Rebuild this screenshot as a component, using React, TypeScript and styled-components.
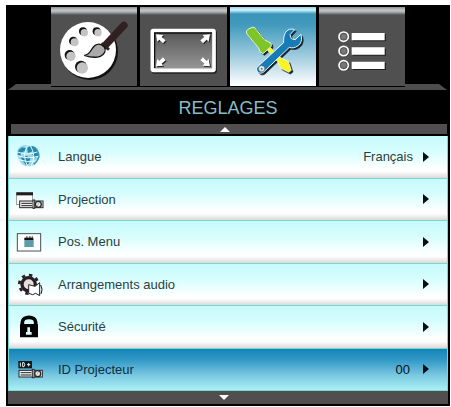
import React, { useState } from "react";
import styled, { createGlobalStyle, css } from "styled-components";

const GlobalStyle = createGlobalStyle`
  * { box-sizing: border-box; }
  body { margin: 0; background: #fff; font-family: "Liberation Sans", Arial, sans-serif; }
  button { font: inherit; color: inherit; border: 0; padding: 0; margin: 0; cursor: pointer; }
  svg { display: block; flex: none; }
`;

const Page = styled.main`
  padding: 5px 1px 1px 6px;
`;

const Panel = styled.section`
  background: #000;
  padding: 2px 2px 2px;
`;

const Tabs = styled.nav`
  position: relative;
  z-index: 1;
  display: grid;
  grid-template-columns: repeat(4, 1fr);
  gap: 3px;
  margin: 0 43px;
  background: #000;
`;

const Tab = styled.button<{ $active: boolean }>`
  display: flex;
  justify-content: center;
  height: 80px;
  overflow: hidden;
  border-bottom: 1px solid #000;
  background: ${({ $active }) =>
    $active
      ? "linear-gradient(#8fd3ea 0, #d8f3fa 3px, #7fc4dd 5px, #3a95b8 7px, #429abd 18px, #9bcadd 48px, #fff 78px)"
      : "linear-gradient(#8b8f8f 0, #c3c6c6 3px, #aeb2b2 5px, #6d6f6f 7px, #505050 8px, #505050 100%)"};
`;

const Ledge = styled.div`
  height: 6px;
  margin-top: -3px;
  margin-right: 1px;
  background: #4d4d4d;
  clip-path: polygon(8px 0, calc(100% - 8px) 0, 100% 100%, 0 100%);
`;

const Title = styled.h1`
  margin: 0;
  height: 34px;
  line-height: 36px;
  text-align: center;
  font-size: 18px;
  font-weight: 400;
  color: #86bcc5;
`;

const ScrollButton = styled.button<{ $edge: "top" | "bottom" }>`
  display: flex;
  align-items: center;
  justify-content: center;
  padding-right: 8px;
  background: #504e4e;
  ${({ $edge }) =>
    $edge === "top"
      ? css`
          width: calc(100% - 4px);
          height: 10px;
          margin: 0 1px 2px 3px;
        `
      : css`
          width: 100%;
          height: 13px;
        `}
`;

const List = styled.ul`
  list-style: none;
  margin: 0;
  padding: 0;
  min-height: 255px;
  display: grid;
  grid-auto-rows: 1fr;
`;

const Item = styled.li`
  display: flex;
`;

const Row = styled.button<{ $selected: boolean }>`
  flex: 1;
  display: flex;
  align-items: center;
  padding: 0 18px 0 6px;
  border: 1px solid #78d8cf;
  border-top: 0;
  font-size: 13px;
  text-align: left;
  color: ${({ $selected }) => ($selected ? "#0c3040" : "#294143")};
  background: ${({ $selected }) =>
    $selected
      ? "linear-gradient(#1684b8, #2f97c5 25%, #7cc9e2 65%, #a9f0f5)"
      : "linear-gradient(#c6fafb, #d6fdfd 35%, #fbffff 75%, #fff 84%, #ddd9d9)"};
`;

const Label = styled.span`
  flex: 1;
  margin-left: 13px;
`;

const Value = styled.span<{ $numeric: boolean }>`
  margin-right: ${({ $numeric }) => ($numeric ? "13px" : "10px")};
  color: ${({ $numeric }) => ($numeric ? "#001018" : "inherit")};
`;

function TabIcon({ x, children }: { x: number; children: React.ReactNode }) {
  return (
    <svg width="86" height="79" viewBox={`${x} 21 258 237`} aria-hidden="true">
      {children}
    </svg>
  );
}

function RowIcon({ y, children }: { y: number; children: React.ReactNode }) {
  return (
    <svg width="30" height="41" viewBox={`45 ${y} 90 123`} aria-hidden="true">
      {children}
    </svg>
  );
}

const holes = [
  [251, 96, 11],
  [292, 96, 11],
  [222, 125, 12],
  [211, 167, 14],
  [245, 202, 17],
];

const Palette = () => (
  <TabIcon x={153}>
    <circle cx="269" cy="155" r="85" fill="#111" />
    <circle cx="264" cy="150" r="84" fill="#fff" />
    {holes.map(([x, y, r]) => (
      <g key={`${x}-${y}`}>
        <circle cx={x - 2} cy={y - 2} r={r + 1} fill="#111" />
        <circle cx={x + 2} cy={y + 2} r={r} fill="#c4c4c4" />
      </g>
    ))}
    <path d="M316 136 372 76" stroke="#302021" strokeWidth="22" strokeLinecap="round" />
    <path d="M304 130 327 149" stroke="#302021" strokeWidth="9" />
    <path
      d="M253 166C274 163 271 147 284 137C294 130 305 132 313 141C320 151 313 163 301 169C287 174 271 172 253 166Z"
      fill="#aaa"
      stroke="#111"
      strokeWidth="4"
    />
  </TabIcon>
);

const arrow = "M0 0 22 2 17 8 29 18 21 27 10 16 4 22Z";

const Screen = () => (
  <TabIcon x={30}>
    <defs>
      <linearGradient id="screenFill" x2="0" y2="1">
        <stop stopColor="#555" />
        <stop offset="1" stopColor="#999" />
      </linearGradient>
    </defs>
    <rect x="70" y="96" width="185" height="119" fill="none" stroke="#222" strokeWidth="12" rx="3" />
    <rect x="67" y="92" width="185" height="119" fill="url(#screenFill)" stroke="#fff" strokeWidth="11" rx="3" />
    <path d="M74 204V99H246" fill="none" stroke="#111" strokeWidth="4" />
    <g fill="#222" transform="translate(3 3)">
      <path d={arrow} transform="translate(78 103)" />
      <path d={arrow} transform="translate(240 103) scale(-1 1)" />
      <path d={arrow} transform="translate(78 199) scale(1 -1)" />
      <path d={arrow} transform="translate(240 199) scale(-1 -1)" />
    </g>
    <g fill="#fff">
      <path d={arrow} transform="translate(78 103)" />
      <path d={arrow} transform="translate(240 103) scale(-1 1)" />
      <path d={arrow} transform="translate(78 199) scale(1 -1)" />
      <path d={arrow} transform="translate(240 199) scale(-1 -1)" />
    </g>
  </TabIcon>
);

const wrench =
  "M108 202 188 128C187 112 190 97 201 90C208 86 216 87 221 89L207 104 211 116 223 119 239 103C245 118 240 132 230 138C221 144 212 145 205 142L128 216C120 222 113 220 109 214C106 210 106 205 108 202Z";

const Tools = () => (
  <TabIcon x={27}>
    <g transform="translate(5 5)" fill="#17272d" stroke="#17272d" strokeWidth="2">
      <path d="M77 101Q73 93 82 87L94 82Q101 80 105 88L130 119 150 130 151 139 126 161 117 155 113 144Z" />
      <path d="M138 149 147 142 181 174 202 184 211 211 203 217 179 205 170 185Z" />
      <path d={wrench} />
    </g>
    <path d="M138 149 147 142 181 174 202 184 211 211 203 217 179 205 170 185Z" fill="#f8f522" stroke="#fff" strokeWidth="2" />
    <path d="M77 101Q73 93 82 87L94 82Q101 80 105 88L130 119 150 130 151 139 126 161 117 155 113 144Z" fill="#7dc52b" stroke="#e2f7d5" strokeWidth="3" />
    <path d={wrench} fill="#177cb5" stroke="#e9faff" strokeWidth="3" />
    <circle cx="122" cy="206" r="9" fill="#e8eeee" stroke="#3c3b38" strokeWidth="1" />
    <circle cx="122" cy="206" r="3" fill="#8e5c50" />
  </TabIcon>
);

const Options = () => (
  <TabIcon x={27}>
    {[110, 153, 196].map((y) => (
      <g key={y}>
        <path d={`M129 ${y - 7}H228V${y + 14}H129Z`} fill="#222" />
        <path d={`M125 ${y - 11}H224V${y + 11}H125Z`} fill="#fff" />
        <circle cx="103" cy={y + 2} r="15" fill="#222" />
        <circle cx="101" cy={y} r="14" fill="#777" stroke="#fff" strokeWidth="5" />
        <circle cx="101" cy={y} r="10" fill="none" stroke="#444" strokeWidth="2" />
      </g>
    ))}
  </TabIcon>
);

const Globe = () => (
  <RowIcon y={48}>
    <path d="M52 94Q53 79 73 75L98 78Q118 83 118 104 118 126 98 137 82 142 67 134 51 120 52 94Z" fill="#9bd9e7" />
    <path d="M55 91 66 82 78 85 75 94 64 97 61 108 53 105ZM81 82 97 78 112 90 116 106 106 115 97 104 98 94 84 99ZM62 113 78 107 91 114 87 130 78 136Z" fill="#2388ad" />
    <path d="M53 96Q82 109 117 94M55 119Q81 128 112 123M84 76Q64 105 83 139M91 77Q109 105 94 138M54 107Q82 119 118 108" fill="none" stroke="#effdff" strokeWidth="3" />
    <path d="M100 80Q117 90 117 110 111 126 101 133" fill="none" stroke="#3598b6" strokeWidth="4" />
  </RowIcon>
);

const Projector = ({ x = 0, y = 0 }) => (
  <g transform={`translate(${x} ${y})`} stroke="#292929" strokeWidth="3">
    <rect x="59" y="243" width="70" height="20" fill="#eee" />
    <path d="M64 250H96M64 257H96" strokeWidth="3" />
    <rect x="99" y="240" width="5" height="25" fill="#fff" />
    <circle cx="115" cy="253" r="9" fill="#eee" strokeWidth="4" />
    <path d="M109 262 120 243" strokeWidth="1" />
  </g>
);

const Projection = () => (
  <RowIcon y={177}>
    <rect x="50" y="218" width="48" height="36" fill="#f9fafa" stroke="#777" strokeWidth="2" />
    <path d="M49 217H99V226H49Z" fill="#231d20" />
    <Projector />
  </RowIcon>
);

const MenuPosition = () => (
  <RowIcon y={5}>
    <rect x="52" y="43" width="70" height="52" fill="#fff" stroke="#465052" strokeWidth="3" />
    <path d="M73 60H101V83H73Z" fill="#5d9ca8" />
    <path d="M73 55H100V62H73Z" fill="#111" />
    <path d="M78 53H83M87 53H92M95 53H99" stroke="#111" strokeWidth="3" />
  </RowIcon>
);

const AudioGear = () => (
  <RowIcon y={131}>
    <circle cx="86" cy="192" r="20" fill="#e8dddd" stroke="#291f20" strokeWidth="10" />
    <circle cx="86" cy="192" r="28" fill="none" stroke="#291f20" strokeWidth="8" strokeDasharray="10 12" />
    <path d="M86 193 105 198 119 187V226L107 219 98 223 86 219Z" fill="#fff" stroke="#222" strokeWidth="3" strokeLinejoin="round" />
    <path d="M122 194Q130 207 123 221" fill="none" stroke="#111" strokeWidth="3" />
  </RowIcon>
);

const Lock = () => (
  <RowIcon y={-12}>
    <path d="M67 45V37C67 17 107 17 107 37V45" fill="none" stroke="#050505" strokeWidth="11" />
    <rect x="60" y="42" width="54" height="40" rx="2" fill="#050505" />
    <path d="M82 52H90V66H95V74H78V66H82Z" fill="#dffafa" />
  </RowIcon>
);

const ProjectorId = () => (
  <RowIcon y={115}>
    <rect x="55" y="151" width="41" height="22" fill="#141719" />
    <path d="M61 156V168M68 156V168H72Q77 162 72 156ZM81 162H91M86 157V167" fill="none" stroke="#e0f2f4" strokeWidth="3" />
    <Projector x={-2} y={-64} />
  </RowIcon>
);

const tabs = [
  { name: "Image", Icon: Palette },
  { name: "Affichage", Icon: Screen },
  { name: "Réglages", Icon: Tools },
  { name: "Options", Icon: Options },
];

const settings = [
  { label: "Langue", value: "Français", Icon: Globe },
  { label: "Projection", Icon: Projection },
  { label: "Pos. Menu", Icon: MenuPosition },
  { label: "Arrangements audio", Icon: AudioGear },
  { label: "Sécurité", Icon: Lock },
  { label: "ID Projecteur", value: "00", numeric: true, Icon: ProjectorId },
];

export default function App() {
  const [activeTab, setActiveTab] = useState(2);
  const [selected, setSelected] = useState(5);
  const move = (step: number) =>
    setSelected((current) => Math.max(0, Math.min(settings.length - 1, current + step)));

  return (
    <Page>
      <GlobalStyle />
      <Panel>
        <Tabs>
          {tabs.map(({ name, Icon }, index) => (
            <Tab
              key={name}
              aria-label={name}
              aria-pressed={activeTab === index}
              $active={activeTab === index}
              onClick={() => setActiveTab(index)}
            >
              <Icon />
            </Tab>
          ))}
        </Tabs>
        <Ledge />
        <Title>REGLAGES</Title>
        <ScrollButton $edge="top" aria-label="Monter" onClick={() => move(-1)}>
          <svg width="10" height="5" viewBox="0 0 10 5">
            <path d="M5 0 10 5H0Z" fill="#fff" />
          </svg>
        </ScrollButton>
        <List>
          {settings.map(({ label, value, numeric, Icon }, index) => (
            <Item key={label}>
              <Row $selected={selected === index} onClick={() => setSelected(index)}>
                <Icon />
                <Label>{label}</Label>
                {value && <Value $numeric={!!numeric}>{value}</Value>}
                <svg width="6" height="10" viewBox="0 0 6 10" aria-hidden="true">
                  <path d="M0 0 6 5 0 10Z" fill="#061014" />
                </svg>
              </Row>
            </Item>
          ))}
        </List>
        <ScrollButton $edge="bottom" aria-label="Descendre" onClick={() => move(1)}>
          <svg width="10" height="5" viewBox="0 0 10 5">
            <path d="M0 0H10L5 5Z" fill="#fff" />
          </svg>
        </ScrollButton>
      </Panel>
    </Page>
  );
}
